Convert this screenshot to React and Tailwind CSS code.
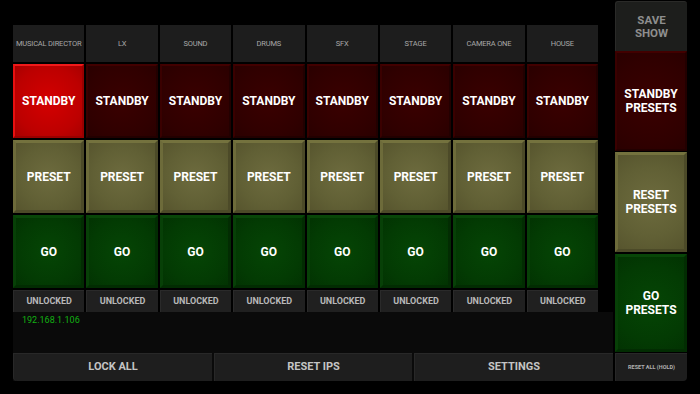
const channels = ["MUSICAL DIRECTOR", "LX", "SOUND", "DRUMS", "SFX", "STAGE", "CAMERA ONE", "HOUSE"];

const Header = ({ label }) => (
  <div className="h-[37px] bg-[#1d1d1d] flex items-center justify-center text-[7.5px] text-[#a8a8a8] tracking-tight whitespace-nowrap">
    {label}
  </div>
);

const Standby = ({ active }) =>
  active ? (
    <div className="h-[74px] flex items-center justify-center border-2 border-t-[#f01a1a] border-l-[#e81010] border-r-[#9a0000] border-b-[#9a0000] bg-[radial-gradient(circle,#d40000_0%,#bc0000_70%,#a80000_100%)] text-white font-bold text-[12px]">
      STANDBY
    </div>
  ) : (
    <div className="h-[74px] flex items-center justify-center border-2 border-t-[#420000] border-l-[#3a0000] border-r-[#220000] border-b-[#220000] bg-[radial-gradient(circle,#3a0000_0%,#300000_70%,#2a0000_100%)] text-white font-bold text-[12px]">
      STANDBY
    </div>
  );

const Preset = () => (
  <div className="h-[73px] flex items-center justify-center border-[3px] border-t-[#74723e] border-l-[#6d6b3a] border-r-[#4c4a28] border-b-[#4c4a28] bg-[radial-gradient(circle,#6d6b3e_0%,#616035_60%,#57552e_100%)] text-white font-bold text-[12px]">
    PRESET
  </div>
);

const Go = () => (
  <div className="h-[73px] flex items-center justify-center border-[3px] border-t-[#084608] border-l-[#074007] border-r-[#022c02] border-b-[#022c02] bg-[radial-gradient(circle,#054505_0%,#033b03_65%,#023302_100%)] text-white font-bold text-[12px]">
    GO
  </div>
);

const Unlocked = () => (
  <div className="h-[22px] flex items-center justify-center bg-[#202020] border-t border-l border-[#2a2a2a] text-[#b8b8b8] font-bold text-[9px]">
    UNLOCKED
  </div>
);

const BarButton = ({ children, className = "" }) => (
  <div className={`h-[28px] flex items-center justify-center bg-[#1e1e1e] border-t border-l border-[#282828] text-[#c4c4c4] font-bold text-[11px] ${className}`}>
    {children}
  </div>
);

export default function App() {
  return (
    <div className="w-[700px] h-[394px] bg-black flex pl-[13px] gap-[2px] overflow-hidden" style={{ fontFamily: "Roboto, 'Liberation Sans', sans-serif" }}>
      <div className="w-[600px] flex flex-col">
        <div className="mt-[25px] w-[585px] grid grid-cols-8 gap-[2px]">
          {channels.map((c) => <Header key={c} label={c} />)}
          {channels.map((c, i) => <Standby key={c} active={i === 0} />)}
          {channels.map((c) => <Preset key={c} />)}
          {channels.map((c) => <Go key={c} />)}
          {channels.map((c) => <Unlocked key={c} />)}
        </div>
        <div className="h-[41px] bg-[#0a0a0a] pl-[9px] pt-[2px] text-[9px] text-[#12b012]">192.168.1.106</div>
        <div className="flex gap-[2px] bg-[#0a0a0a]">
          <BarButton className="w-[199px] rounded-bl-[4px]">LOCK ALL</BarButton>
          <BarButton className="w-[198px]">RESET IPS</BarButton>
          <BarButton className="w-[199px]">SETTINGS</BarButton>
        </div>
      </div>
      <div className="w-[72px] flex flex-col pt-[1px]">
        <div className="h-[50px] rounded-t-[3px] bg-[#1d1e1c] border-t border-l border-[#2a2a28] flex flex-col items-center justify-center text-center text-[#8e8e8e] font-bold text-[11.5px] leading-[13px]">
          <span>SAVE</span>
          <span>SHOW</span>
        </div>
        <div className="h-[100px] flex items-center justify-center text-center border-2 border-t-[#420000] border-l-[#3a0000] border-r-[#220000] border-b-[#220000] bg-[radial-gradient(circle,#3a0000_0%,#300000_70%,#2a0000_100%)] text-white font-bold text-[12px] leading-[14px]">
          STANDBY<br />PRESETS
        </div>
        <div className="h-[100px] mt-[1px] flex items-center justify-center text-center border-[3px] border-t-[#74723e] border-l-[#6d6b3a] border-r-[#4c4a28] border-b-[#4c4a28] bg-[radial-gradient(circle,#6d6b3e_0%,#616035_60%,#57552e_100%)] text-white font-bold text-[12px] leading-[14px]">
          RESET<br />PRESETS
        </div>
        <div className="h-[98px] mt-[2px] flex items-center justify-center text-center border-[3px] border-t-[#084608] border-l-[#074007] border-r-[#022c02] border-b-[#022c02] bg-[radial-gradient(circle,#054505_0%,#033b03_65%,#023302_100%)] text-white font-bold text-[12px] leading-[14px]">
          GO<br />PRESETS
        </div>
        <div className="h-[28px] mt-[1px] rounded-br-[4px] bg-[#1e1e1e] border-t border-l border-[#282828] flex items-center justify-center text-[#b0b0b0] font-bold text-[5.5px] whitespace-nowrap">
          RESET ALL (HOLD)
        </div>
      </div>
    </div>
  );
}
